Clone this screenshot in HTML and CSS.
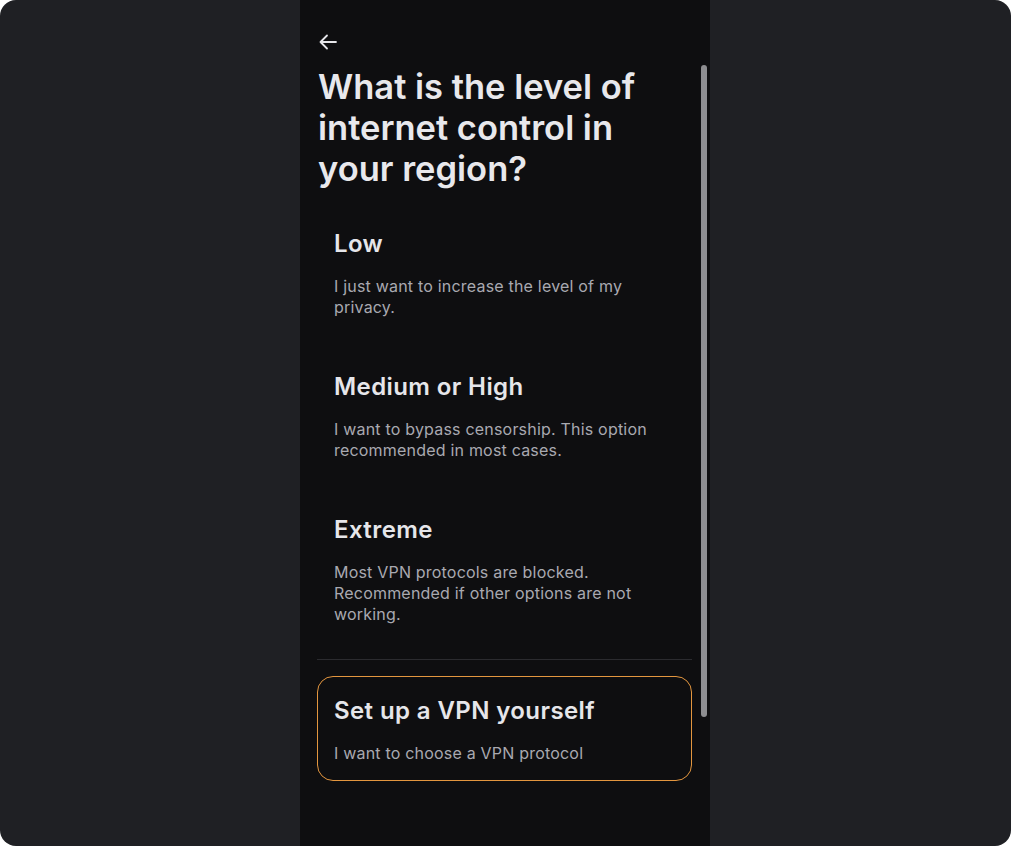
FILE: index.html
```html
<!DOCTYPE html>
<html lang="en">
<head>
<meta charset="utf-8">
<title>Internet control level</title>
<link rel="stylesheet" href="styles.css">
</head>
<body>
<div class="frame">
  <div class="panel">
    <div class="content">
      <button class="back" aria-label="Back">
        <svg width="20" height="18" viewBox="0 0 20 18" fill="none" stroke="#e6e6ea" stroke-width="1.8" stroke-linecap="round" stroke-linejoin="round">
          <path d="M18 9H2.5M9 2.5L2.5 9L9 15.5"/>
        </svg>
      </button>
      <h1 class="title">What is the level of internet control in your region?</h1>
      <div class="options">
        <div class="option">
          <h2 class="opt-title">Low</h2>
          <p class="opt-desc">I just want to increase the level of my privacy.</p>
        </div>
        <div class="option">
          <h2 class="opt-title">Medium or High</h2>
          <p class="opt-desc">I want to bypass censorship. This option recommended in most cases.</p>
        </div>
        <div class="option">
          <h2 class="opt-title">Extreme</h2>
          <p class="opt-desc">Most VPN protocols are blocked. Recommended if other options are not working.</p>
        </div>
        <div class="divider"></div>
        <div class="option selected">
          <h2 class="opt-title">Set up a VPN yourself</h2>
          <p class="opt-desc">I want to choose a VPN protocol</p>
        </div>
      </div>
    </div>
    <div class="scroll-track"><div class="scroll-thumb"></div></div>
  </div>
</div>
</body>
</html>
```

FILE: styles.css
```css
html, body {
  margin: 0;
  padding: 0;
  background: #ffffff;
}
body {
  font-family: Inter, "Noto Sans", "Liberation Sans", sans-serif;
}
.frame {
  width: 1011px;
  height: 846px;
  box-sizing: border-box;
  border-radius: 16px;
  background: #1f2024;
  display: flex;
  padding-left: 300px;
  overflow: hidden;
}
.panel {
  width: 410px;
  height: 846px;
  background: #0e0e10;
  display: flex;
  box-sizing: border-box;
  padding-left: 17px;
}
.content {
  width: 375px;
  display: flex;
  flex-direction: column;
}
.back {
  margin: 33px 0 0 1px;
  padding: 0;
  width: 20px;
  height: 18px;
  background: none;
  border: none;
  display: flex;
}
.title {
  margin: 15px 0 0 1px;
  max-width: 340px;
  font-size: 34.5px;
  line-height: 41px;
  font-weight: 600;
  color: #e8e8ec;
  letter-spacing: 0;
}
.options {
  margin-top: 21px;
  display: flex;
  flex-direction: column;
  gap: 18px;
}
.option {
  border: 1px solid transparent;
  border-radius: 16px;
  padding: 16px;
}
.option.selected {
  border-color: #e3963f;
  padding-top: 17px;
}
.opt-title {
  margin: 0;
  font-size: 24px;
  line-height: 34px;
  font-weight: 600;
  color: #e6e6ea;
  letter-spacing: 0.4px;
}
.opt-desc {
  margin: 15px 0 0;
  max-width: 330px;
  font-size: 16px;
  line-height: 21px;
  color: #a9a9b0;
  font-weight: 400;
  letter-spacing: 0.2px;
}
.divider {
  height: 1px;
  margin: -1px 0 -2px;
  background: #2b2b2f;
}
.scroll-track {
  margin-left: 9px;
  width: 6px;
  padding-top: 65px;
}
.scroll-thumb {
  width: 6px;
  height: 652px;
  border-radius: 3px;
  background: #8d8d90;
}
```
